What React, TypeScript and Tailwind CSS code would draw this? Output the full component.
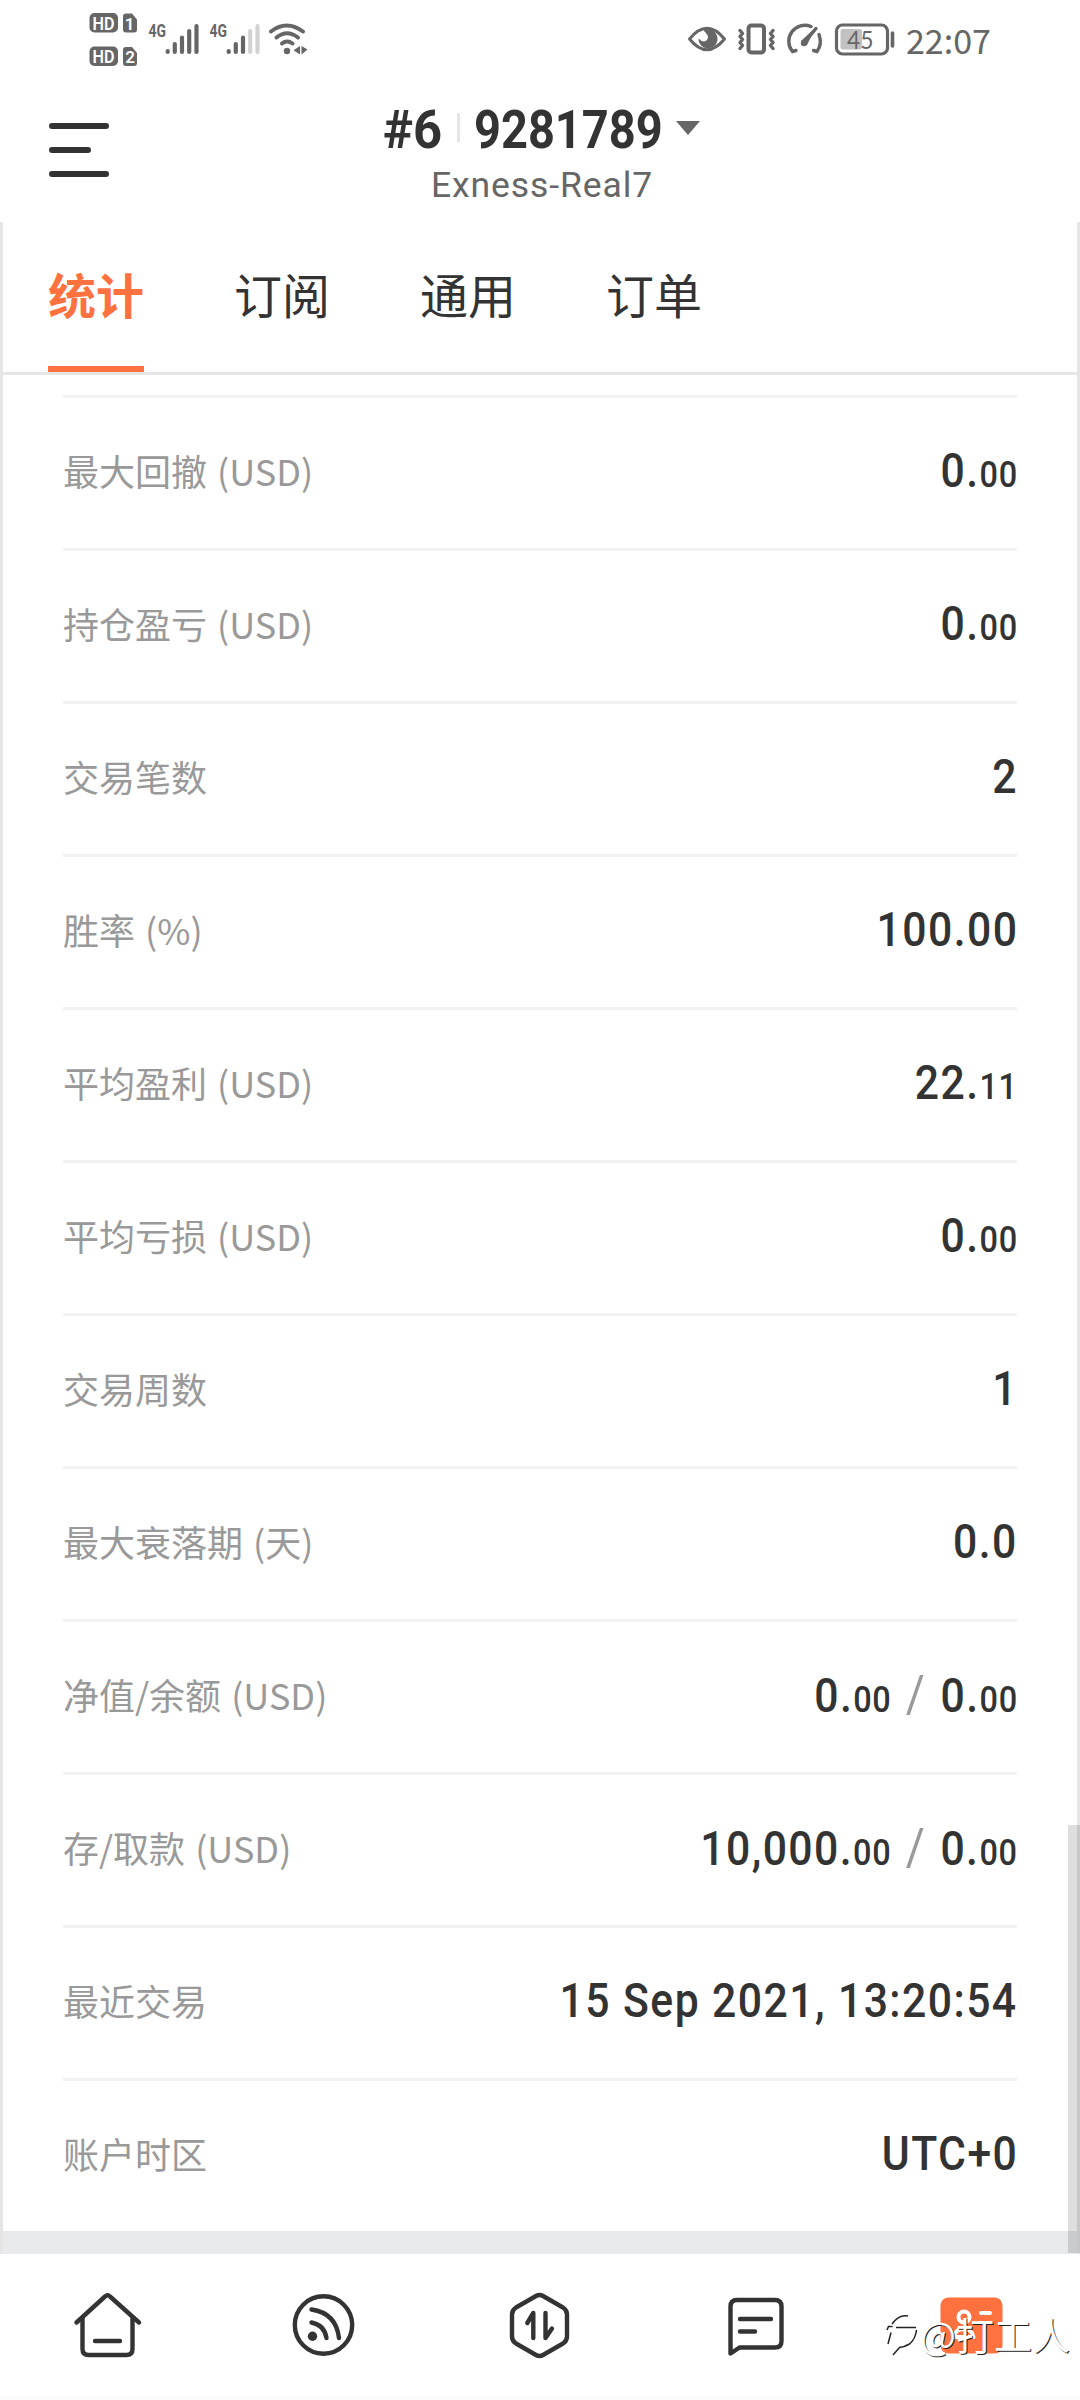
import React from "react";

type Amount = { main: string; cents?: string };
type Row = { label: string; values: Amount[] };

const rows: Row[] = [
  { label: "最大回撤 (USD)", values: [{ main: "0.", cents: "00" }] },
  { label: "持仓盈亏 (USD)", values: [{ main: "0.", cents: "00" }] },
  { label: "交易笔数", values: [{ main: "2" }] },
  { label: "胜率 (%)", values: [{ main: "100.00" }] },
  { label: "平均盈利 (USD)", values: [{ main: "22.", cents: "11" }] },
  { label: "平均亏损 (USD)", values: [{ main: "0.", cents: "00" }] },
  { label: "交易周数", values: [{ main: "1" }] },
  { label: "最大衰落期 (天)", values: [{ main: "0.0" }] },
  { label: "净值/余额 (USD)", values: [{ main: "0.", cents: "00" }, { main: "0.", cents: "00" }] },
  { label: "存/取款 (USD)", values: [{ main: "10,000.", cents: "00" }, { main: "0.", cents: "00" }] },
  { label: "最近交易", values: [{ main: "15 Sep 2021, 13:20:54" }] },
  { label: "账户时区", values: [{ main: "UTC+0" }] },
];

const tabs = ["统计", "订阅", "通用", "订单"];

function HdBadges() {
  return (
    <svg className="h-20 w-[50px]" viewBox="88 0 50 80" fill="#666">
      <rect x="89.500" y="13" width="28.500" height="19.500" rx="5" />
      <path d="M126 13.500h6l5 6v10q0 3-3 3h-8q-3 0-3-3v-13q0-3 3-3z" />
      <rect x="89.500" y="46.500" width="28.500" height="19.500" rx="5" />
      <path d="M126 47h6l5 6v10q0 3-3 3h-8q-3 0-3-3v-13q0-3 3-3z" />
      <g fill="#fff" fontFamily="Roboto, sans-serif" fontWeight="600" fontSize="18" textAnchor="middle">
        <text x="103.500" y="29.500" textLength="22" lengthAdjust="spacingAndGlyphs">HD</text>
        <text x="129.500" y="29.500" fontSize="17">1</text>
        <text x="103.500" y="63" textLength="22" lengthAdjust="spacingAndGlyphs">HD</text>
        <text x="130" y="63" fontSize="17">2</text>
      </g>
    </svg>
  );
}

function Signal({ weak }: { weak?: boolean }) {
  const dim = weak ? "#d2d2d2" : "#666";
  return (
    <svg className="h-20 w-[52px]" viewBox="148 0 52 80">
      <text x="148.500" y="37" fill="#666" fontFamily="Roboto, sans-serif" fontWeight="700" fontSize="18.500" textLength="17.500" lengthAdjust="spacingAndGlyphs">4G</text>
      <g strokeWidth="4.200" strokeLinecap="round" stroke="#666">
        <path d="M167.700 51v1M174.800 44v8M182 37.500V52" />
        <path d="M189.200 31v21M196.500 26v26" stroke={dim} />
      </g>
    </svg>
  );
}

function Wifi() {
  return (
    <svg className="h-20 w-10" viewBox="268 0 40 80" fill="none" stroke="#666" strokeWidth="4" strokeLinecap="round">
      <path d="M271 31.500Q286.500 19.500 303 31.500M276.500 37.500Q287 29 298 37.500M282 43.500Q287 39.500 292.500 43.500" />
      <circle cx="287" cy="51" r="3.200" fill="#666" stroke="none" />
      <path d="M300 46v8.500l-6.500-4.200zM301.500 46v8.500l6-5z" fill="#666" stroke="none" />
    </svg>
  );
}

function Eye() {
  return (
    <svg className="h-20 w-10" viewBox="687 0 40 80" fill="none">
      <path d="M689.500 39Q707 17.500 724.500 39Q707 60.500 689.500 39z" stroke="#666" strokeWidth="3" strokeLinejoin="round" />
      <path d="M703.500 30.500a9.500 9.500 0 1 1-5 8q5 5 8.500 1.500q3-4-3.500-9.500z" fill="#666" />
    </svg>
  );
}

function Vibrate() {
  return (
    <svg className="h-20 w-10" viewBox="737 0 40 80" fill="none" stroke="#666" strokeWidth="3.400" strokeLinejoin="round" strokeLinecap="round">
      <rect x="748.500" y="25.500" width="15.500" height="27" rx="3" strokeWidth="4" />
      <path d="M740 30.500l2.500 3-2.500 3 2.500 3-2.500 3 2.500 3-2.500 3M773 30.500l-2.500 3 2.500 3-2.500 3 2.500 3-2.500 3 2.500 3" />
    </svg>
  );
}

function Gauge() {
  return (
    <svg className="h-20 w-10" viewBox="785 0 40 80" fill="none" stroke="#666" strokeWidth="3.400" strokeLinecap="round">
      <path d="M811 26.500A16 16 0 0 0 792.500 51.500L796 50.500M819 34.500Q822.500 44 817 51.500L813.500 50.500" />
      <path d="M816 28.500L804 43" />
      <circle cx="804" cy="43" r="3.200" fill="#666" stroke="none" />
      <path d="M816 27L801 41l6 4z" fill="#666" stroke="none" />
    </svg>
  );
}

function Battery() {
  return (
    <svg className="h-20 w-[62px]" viewBox="834 0 62 80" fill="none">
      <rect x="836.500" y="25" width="51" height="29" rx="6" stroke="#666" strokeWidth="3.200" />
      <rect x="840.500" y="29" width="21.500" height="20.500" rx="2" fill="#c2c2c2" />
      <path d="M892.500 33v13" stroke="#666" strokeWidth="3.600" strokeLinecap="round" />
      <text x="847" y="48.500" fill="#666" fontFamily="Lato, sans-serif" fontSize="25.500" textLength="26.500" lengthAdjust="spacingAndGlyphs">45</text>
    </svg>
  );
}

function StatusBar() {
  return (
    <div className="flex h-20 items-center pl-[88px] text-[#666]">
      <HdBadges />
      <div className="ml-2.5 flex">
        <Signal />
      </div>
      <div className="ml-[9px] flex">
        <Signal weak />
      </div>
      <div className="ml-[7px] flex">
        <Wifi />
      </div>
      <div className="ml-[379px] flex gap-2.5">
        <Eye />
        <Vibrate />
        <div className="-ml-0.5 flex">
          <Gauge />
        </div>
        <div className="-ml-px flex">
          <Battery />
        </div>
      </div>
      <span className="ml-[10px] font-['Noto_Sans_CJK_SC'] text-[34px] leading-[76px] tracking-[0px]">22:07</span>
    </div>
  );
}

function Header() {
  return (
    <header className="flex h-[142px] pl-[49px]">
      <button className="mt-[43px] flex h-[54px] w-[60px] flex-col justify-between" aria-label="menu">
        <span className="h-1.5 w-[60px] rounded-full bg-[#333]" />
        <span className="h-1.5 w-[42px] rounded-full bg-[#333]" />
        <span className="h-1.5 w-[60px] rounded-full bg-[#333]" />
      </button>
      <div className="ml-[274px] flex w-[320px] flex-col font-[Roboto]">
        <div className="mt-[19px] flex h-[62px] items-center text-[54px] leading-[62px] font-bold whitespace-nowrap text-[#333]">
          <span className="w-[74px] origin-left scale-x-[0.940]">#6</span>
          <span className="-mt-[5px] h-[29px] w-[3px] bg-[#e5e5e5]" />
          <span className="ml-[14px] w-[202px] origin-left scale-x-[0.870]">9281789</span>
          <svg className="-mt-[4px] h-[14px] w-6" viewBox="0 0 24 14" fill="#666">
            <path d="M0 0h24L12 14z" />
          </svg>
        </div>
        <span className="ml-[48px] text-[35.500px] leading-[48px] tracking-[0.900px] whitespace-nowrap text-[#666]">Exness-Real7</span>
      </div>
    </header>
  );
}

function Tabs() {
  return (
    <nav className="flex h-[153px] gap-[90px] border-b-[3px] border-[#e5e5e5] pl-[45px] text-[48px] text-[#333]">
      {tabs.map((tab, i) => (
        <span
          key={tab}
          className={
            i === 0
              ? "h-[150px] w-24 border-b-[6px] border-[#ff7240] leading-[143px] font-bold text-[#ff7240]"
              : "h-[150px] w-24 leading-[143px]"
          }
        >
          {tab}
        </span>
      ))}
    </nav>
  );
}

function StatRow({ row }: { row: Row }) {
  return (
    <div className="flex h-[153px] items-center justify-between border-t-[3px] border-[#f2f2f2]">
      <span className="-mt-[7px] text-[36px] leading-none text-[#999] [word-spacing:2px]">{row.label}</span>
      <span className="-mt-1 -mr-px origin-right scale-x-[0.890] font-[Roboto] text-[48px] leading-none font-medium tracking-[1.600px] whitespace-nowrap text-[#333]">
        {row.values.map((v, i) => (
          <React.Fragment key={i}>
            {i > 0 && <span className="mx-[16px] text-[52px] leading-none font-normal text-[#999]">/</span>}
            {v.main}
            {v.cents && <span className="text-[36.500px] tracking-[0.800px]">{v.cents}</span>}
          </React.Fragment>
        ))}
      </span>
    </div>
  );
}

const line = {
  fill: "none",
  stroke: "#333",
  strokeWidth: 4.4,
  strokeLinecap: "round" as const,
  strokeLinejoin: "round" as const,
};

function BottomNav() {
  return (
    <footer className="relative grid h-[146px] grid-cols-5 items-center justify-items-center border-b-4 border-[#fafafa] bg-white">
      <svg className="size-20" viewBox="68 2285 80 80" {...line}>
        <path d="M76.500 2322.500L105 2296.500Q107.500 2294 110 2296.500L139 2322.500" />
        <path d="M82.500 2318v31q0 6 6 6h38q6 0 6-6v-31" />
        <path d="M95 2341h25" />
      </svg>
      <svg className="size-20" viewBox="284 2285 80 80" {...line}>
        <circle cx="323.500" cy="2325" r="28.700" />
        <path d="M311.500 2309.500Q336 2313 339 2338M311.500 2322.500Q324.500 2325 326.500 2338" />
        <circle cx="312.500" cy="2336.300" r="4.700" fill="#333" stroke="none" />
      </svg>
      <svg className="size-20" viewBox="500 2285 80 80" {...line}>
        <path d="M536 2296q3.500-2 7 0l20 11.500q4 2.500 4 7v22q0 4.500-4 7l-20 11.500q-3.500 2-7 0l-20-11.500q-4-2.500-4-7v-22q0-4.500 4-7z" />
        <path d="M533.300 2338v-25l-6 10M545.500 2313v25l6.500-9.500" />
      </svg>
      <svg className="size-20" viewBox="716 2285 80 80" {...line}>
        <path d="M730.500 2353.500v-47q0-6.500 6.500-6.500h38q6.500 0 6.500 6.500v34.500q0 6.500-6.500 6.500h-35.500z" />
        <path d="M740 2319h31M740 2331.500h15" />
      </svg>
      <svg className="size-20" viewBox="932 2285 80 80" fill="none" stroke="#fff" strokeWidth="4" strokeLinecap="round">
        <rect x="940.500" y="2297.500" width="62" height="56" rx="8" fill="#ff7240" stroke="none" />
        <circle cx="964" cy="2317" r="5.500" />
        <path d="M954 2337q1-8 9.500-8t10 8zM981 2313h9M981 2323h9" strokeLinejoin="round" />
      </svg>
      <div className="absolute top-[57px] left-[886px] flex items-center">
        <svg className="h-[46px] w-[34px]" viewBox="886 2320 34 46" fill="none" stroke="#222" strokeWidth="1.500">
          <path d="M887 2339l1.500-3.500h4M891 2341.500l-3 11.500M896 2336.500h20M892 2333q7-10 16-8M916.500 2339q-1 9-7 14-5 3-10 3.500L893 2364" />
        </svg>
        <span className="text-[38px] leading-[46px] whitespace-nowrap text-white [text-shadow:1px_1px_0px_#222]">@打工人</span>
      </div>
    </footer>
  );
}

export default function App() {
  return (
    <div className="h-[2400px] w-[1080px] overflow-hidden bg-white font-['Noto_Sans_CJK_SC',sans-serif]">
      <StatusBar />
      <Header />
      <main className="relative h-[2032px] border-x-[3px] border-[#e5e5e5]">
        <Tabs />
        <section className="mx-[60px] mt-5">
          {rows.map((row) => (
            <StatRow key={row.label} row={row} />
          ))}
        </section>
        <div className="h-[23px] bg-[#e9eaeb]" />
        <div className="absolute top-[1603px] -right-[3px] h-[428px] w-3 bg-black/13" />
      </main>
      <BottomNav />
    </div>
  );
}
